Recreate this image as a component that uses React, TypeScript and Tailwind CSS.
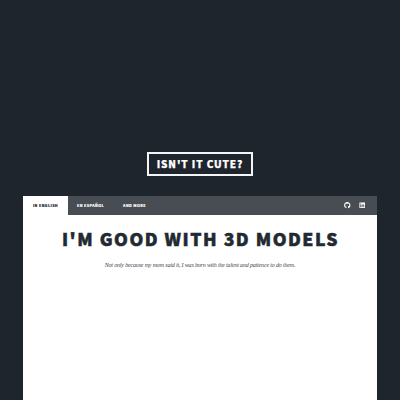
import { FaGithub, FaLinkedin } from "react-icons/fa";

export default function App() {
  return (
    <div className="flex h-[400px] w-[400px] flex-col items-center overflow-hidden bg-[#1e252d] font-['Noto_Sans_CJK_JP','Noto_Sans',sans-serif]">
      <header className="mt-[152px] flex h-6 w-[106px] shrink-0 items-center justify-center border-2 border-[#f4f5f6]">
        <span className="-mt-px whitespace-nowrap text-[10px] leading-4 font-black tracking-[0.9px] text-white [-webkit-text-stroke:0.25px_white]">ISN'T IT CUTE?</span>
      </header>
      <nav className="mt-5 flex h-[19px] w-[354px] shrink-0 bg-[#474d53] text-[3.7px] leading-[19px] font-black tracking-[0.37px] text-white [-webkit-text-stroke:0.12px_currentColor]">
        <a className="w-[45px] bg-white text-center text-[#1e252d]">IN ENGLISH</a>
        <a className="w-[45px] text-center">EN ESPAÑOL</a>
        <a className="w-[43px] text-center">AND MORE</a>
        <div className="mr-3 ml-auto flex h-[19px] items-center gap-2 text-[6.5px]">
          <FaGithub />
          <FaLinkedin />
        </div>
      </nav>
      <main className="flex w-[354px] flex-1 flex-col items-center bg-white">
        <h1 className="mt-3 whitespace-nowrap pl-px text-[17.6px] leading-6 font-black tracking-[1.5px] text-[#212931] [-webkit-text-stroke:0.5px_#212931]">I'M GOOD WITH 3D MODELS</h1>
        <p className="mt-[9px] whitespace-nowrap font-['Liberation_Serif',serif] text-[6px] leading-[10px] tracking-[-0.165px] italic text-[#41474d]">Not only because my mom said it, I was born with the talent and patience to do them.</p>
      </main>
    </div>
  );
}
